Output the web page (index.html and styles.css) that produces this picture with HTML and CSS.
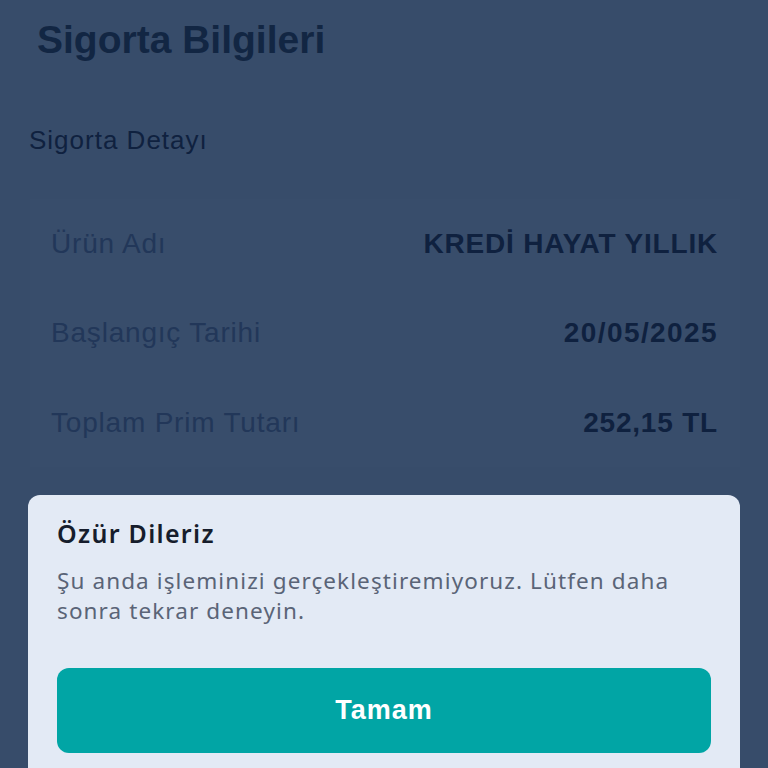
FILE: index.html
```html
<!DOCTYPE html>
<html lang="tr">
<head>
<meta charset="utf-8">
<link rel="stylesheet" href="styles.css">
</head>
<body>
<div class="page">
  <h1 class="title">Sigorta Bilgileri</h1>
  <h2 class="section">Sigorta Detayı</h2>
  <div class="card">
    <div class="row"><span class="label">Ürün Adı</span><span class="value">KREDİ HAYAT YILLIK</span></div>
    <div class="row"><span class="label">Başlangıç Tarihi</span><span class="value num">20/05/2025</span></div>
    <div class="row"><span class="label">Toplam Prim Tutarı</span><span class="value">252,15 TL</span></div>
  </div>
</div>
<div class="overlay">
  <div class="modal">
    <div class="modal-title">Özür Dileriz</div>
    <div class="modal-text">Şu anda işleminizi gerçekleştiremiyoruz. Lütfen daha sonra tekrar deneyin.</div>
    <button class="btn">Tamam</button>
  </div>
</div>
</body>
</html>
```
FILE: styles.css
```css
html, body {
  margin: 0;
  padding: 0;
  width: 768px;
  height: 768px;
  overflow: hidden;
  background: #374c6a;
}
.page {
  font-family: "Liberation Sans", Arial, sans-serif;
  padding: 0 28px 0 29px;
}
.title {
  margin: 0;
  padding: 18px 0 0 8px;
  font-size: 39px;
  font-weight: bold;
  line-height: 44px;
  color: #122643;
}
.section {
  margin: 0;
  padding-top: 63px;
  font-size: 26px;
  letter-spacing: 1px;
  font-weight: normal;
  line-height: 30px;
  color: #0f213f;
}
.card {
  margin-top: 44px;
  margin-left: 1px;
  background: #384d6b;
  padding: 0 22px 0 21px;
  height: 268px;
}
.row {
  display: flex;
  justify-content: space-between;
  align-items: center;
  height: 89.5px;
}
.label {
  font-size: 28px;
  letter-spacing: 0.8px;
  color: #223759;
}
.value {
  font-size: 28px;
  letter-spacing: 0.8px;
  font-weight: bold;
  color: #0f213f;
}
.value.num {
  letter-spacing: 1.4px;
}
.overlay {
  position: absolute;
  left: 0;
  top: 0;
  width: 768px;
  height: 768px;
}
.modal {
  position: absolute;
  left: 28px;
  top: 495px;
  width: 712px;
  height: 300px;
  box-sizing: border-box;
  background: #e3eaf5;
  border-radius: 12px;
  padding: 20px 29px 0 29px;
  font-family: "Noto Sans", sans-serif;
}
.modal-title {
  font-size: 25px;
  letter-spacing: 1.3px;
  font-weight: 600;
  line-height: 36px;
  color: #161d2c;
}
.modal-text {
  margin-top: 15px;
  font-size: 22.5px;
  letter-spacing: 1.1px;
  line-height: 30px;
  color: #5a6477;
  width: 630px;
}
.btn {
  display: block;
  margin-top: 42px;
  width: 654px;
  height: 85px;
  border: none;
  border-radius: 12px;
  background: #01a5a5;
  color: #ffffff;
  font-family: "Liberation Sans", Arial, sans-serif;
  font-size: 27px;
  letter-spacing: 1px;
  font-weight: bold;
}
```
